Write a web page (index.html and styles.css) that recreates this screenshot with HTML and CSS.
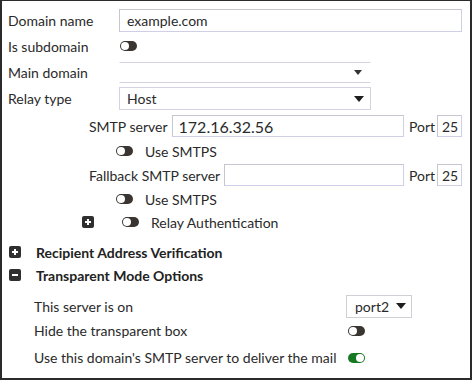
FILE: index.html
```html
<!DOCTYPE html>
<html>
<head>
  <meta charset="utf-8">
  <link rel="stylesheet" href="styles.css">
</head>
<body>
  <div class="panel">

    <div class="row r1">
      <label class="lbl">Domain name</label>
      <input class="txt wide" type="text" value="example.com">
    </div>

    <div class="row r2">
      <label class="lbl">Is subdomain</label>
      <span class="toggle"></span>
    </div>

    <div class="row r3">
      <label class="lbl">Main domain</label>
      <div class="select flat"><span class="val"></span><span class="caret small"></span></div>
    </div>

    <div class="row r4">
      <label class="lbl">Relay type</label>
      <div class="select"><span class="val">Host</span><span class="caret"></span></div>
    </div>

    <!-- relay host block, indented -->
    <div class="row sub r5">
      <label class="sublbl">SMTP server</label>
      <input class="txt host big" type="text" value="172.16.32.56">
      <label class="port">Port</label>
      <input class="txt portnum" type="text" value="25">
    </div>

    <div class="row opt r6">
      <span class="toggle"></span>
      <span class="opttext">Use SMTPS</span>
    </div>

    <div class="row sub r7">
      <label class="sublbl">Fallback SMTP server</label>
      <input class="txt host" type="text" value="">
      <label class="port">Port</label>
      <input class="txt portnum" type="text" value="25">
    </div>

    <div class="row opt r8">
      <span class="toggle"></span>
      <span class="opttext">Use SMTPS</span>
    </div>

    <div class="row auth r9">
      <span class="box plus"></span>
      <span class="toggle"></span>
      <span class="opttext">Relay Authentication</span>
    </div>

    <div class="row section r10">
      <span class="box plus"></span>
      <span class="head">Recipient Address Verification</span>
    </div>

    <div class="row section r11">
      <span class="box minus"></span>
      <span class="head">Transparent Mode Options</span>
    </div>

    <div class="row trans r12">
      <span class="tlbl">This server is on</span>
      <div class="select mini"><span class="val">port2</span><span class="caret"></span></div>
    </div>

    <div class="row trans r13">
      <span class="tlbl">Hide the transparent box</span>
      <span class="toggle"></span>
    </div>

    <div class="row trans r14">
      <span class="tlbl">Use this domain's SMTP server to deliver the mail</span>
      <span class="toggle on"></span>
    </div>

  </div>
</body>
</html>
```

FILE: styles.css
```css
html,
body {
  margin: 0;
  padding: 0;
  background: #fff;
}

body {
  font-family: Lato, "Liberation Sans", sans-serif;
  font-size: 14px;
  color: #2a2a2a;
}

.panel {
  box-sizing: border-box;
  width: 472px;
  height: 380px;
  border: 2px solid #2b2b2b;
  border-top-width: 1px;
  padding: 6px 8px 0 6px;
}

.row {
  display: flex;
  align-items: center;
  white-space: nowrap;
}

/* row heights tuned to the reference */
.r1 { height: 26px; }
.r2 { height: 26px; }
.r3 { height: 26px; }
.r4 { height: 27px; }
.r5 { height: 28px; }
.r6 { height: 22px; }
.r7 { height: 26px; }
.r8 { height: 22px; }
.r9 { height: 24px; }
.r10 { height: 24px; margin-top: 6px; }
.r11 { height: 22px; }
.r12 { height: 24px; margin-top: 8px; }
.r13 { height: 25px; }
.r14 { height: 29px; }

.lbl {
  width: 111px;
  flex: none;
}

.txt {
  box-sizing: border-box;
  height: 23px;
  border: 1px solid #c6c6cf;
  border-right-color: #cfcfe8;
  border-bottom-color: #cfcfe8;
  background: #fff;
  font-family: inherit;
  font-size: 14px;
  color: #2a2a2a;
  padding: 0 7px;
  margin: 0;
  outline: none;
}

.wide {
  width: 345px;
}

.select {
  box-sizing: border-box;
  width: 252px;
  height: 23px;
  border: 1px solid #d3d3e4;
  display: flex;
  align-items: center;
  justify-content: space-between;
  padding: 0 6px 0 7px;
}

.select.flat {
  border-left-color: transparent;
  border-right-color: transparent;
  height: 21px;
}

.caret {
  width: 0;
  height: 0;
  border-left: 5px solid transparent;
  border-right: 5px solid transparent;
  border-top: 6px solid #1e1e1e;
}

.caret.small {
  border-left-width: 4px;
  border-right-width: 4px;
  border-top: 5px solid #333;
  margin-right: 2px;
}

.sub {
  padding-left: 81px;
}

.sublbl {
  flex: none;
  margin-right: 4px;
}

.host {
  flex: 1;
  min-width: 0;
  height: 22px;
}

.big {
  font-size: 16px;
  padding-left: 6px;
}

.port {
  flex: none;
  margin-left: 5px;
  width: 28px;
}

.portnum {
  flex: none;
  width: 25px;
  height: 22px;
  padding: 0 0 0 4px;
  font-size: 14px;
}

.opt {
  padding-left: 108px;
}

.auth {
  padding-left: 74px;
}

.auth .box {
  margin-right: 28px;
}

.opttext {
  margin-left: 12px;
}

/* toggle switches */
.toggle {
  position: relative;
  display: inline-block;
  width: 17px;
  height: 10px;
  border-radius: 5px;
  background: #3a3530;
  flex: none;
}

.toggle::after {
  content: "";
  position: absolute;
  left: 1px;
  top: 1px;
  width: 8px;
  height: 8px;
  border-radius: 50%;
  background: #fff;
}

.toggle.on {
  background: #177a22;
}

.toggle.on::after {
  left: auto;
  right: 1px;
}

.r2 .toggle {
  margin-left: 1px;
}

/* expand / collapse boxes */
.box {
  position: relative;
  display: inline-block;
  width: 12px;
  height: 12px;
  border-radius: 2px;
  background: #2f2f2f;
  flex: none;
}

.box::before,
.box::after {
  content: "";
  position: absolute;
  background: #fff;
}

.box::before {
  left: 3px;
  top: 5px;
  width: 6px;
  height: 2px;
}

.plus::after {
  left: 5px;
  top: 3px;
  width: 2px;
  height: 6px;
}

.minus::after {
  display: none;
}

.section {
  padding-left: 1px;
}

.head {
  font-weight: bold;
  margin-left: 15px;
  color: #222;
}

.trans {
  padding-left: 26px;
}

.tlbl {
  width: 312px;
  flex: none;
}

.trans .toggle {
  margin-left: 2px;
}

.select.mini {
  width: 66px;
  height: 23px;
  border-color: #cfcfd6;
  padding: 0 5px 0 8px;
}
```
